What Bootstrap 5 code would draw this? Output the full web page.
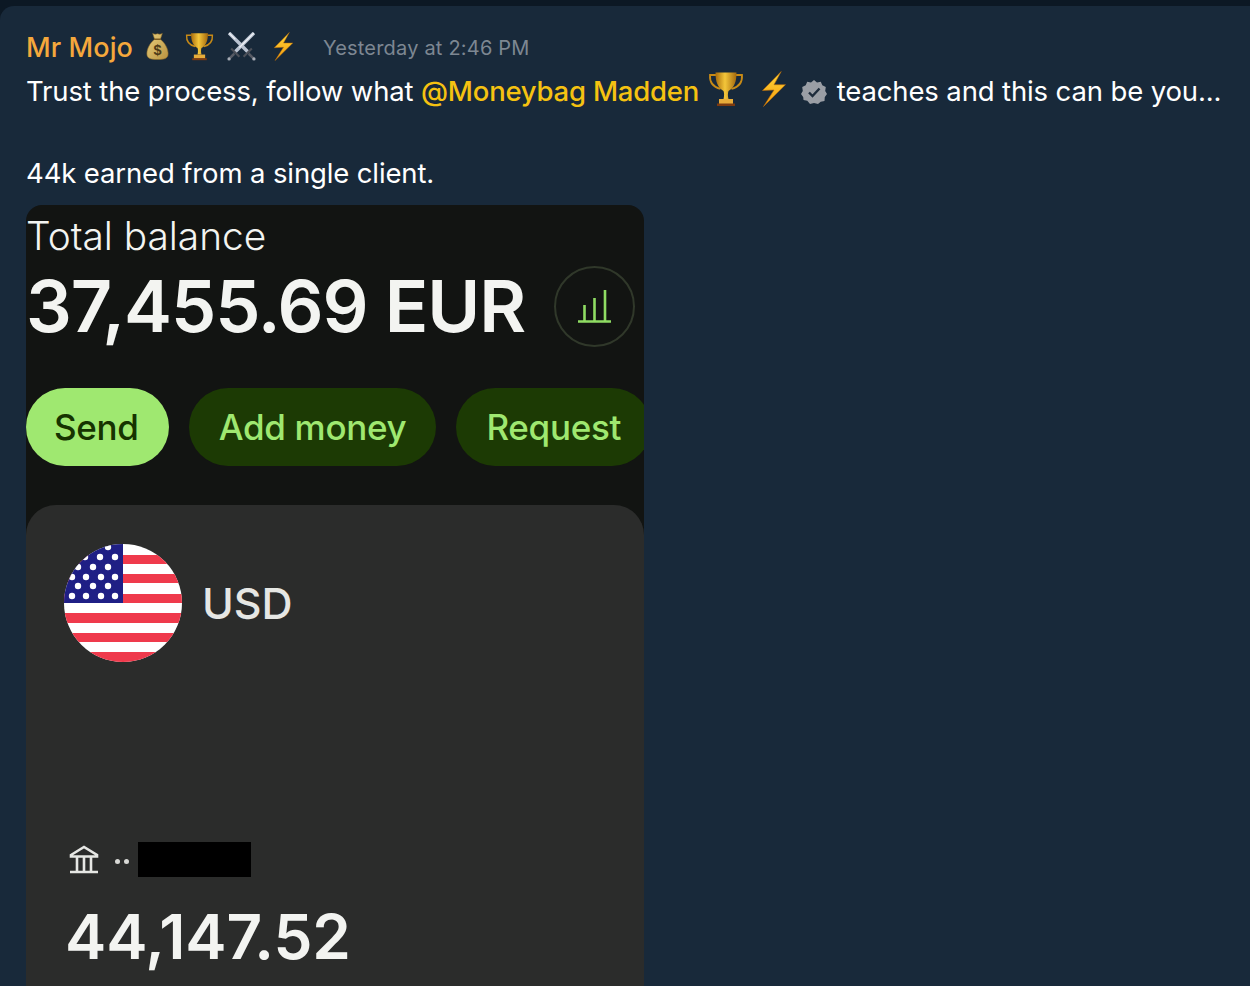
<!DOCTYPE html>
<html lang="en">
<head>
  <meta charset="UTF-8" />
  <meta name="viewport" content="width=device-width, initial-scale=1.0"/>
  <title>Message</title>
  <link href="https://cdn.jsdelivr.net/npm/bootstrap@5.3.3/dist/css/bootstrap.min.css" rel="stylesheet">
  <style>
    body {
      background: #0c1824;
      font-family: Inter, "Liberation Sans", sans-serif;
      height: 986px;
      overflow: hidden;
    }
    .msg-panel {
      background: #18293a;
      margin-top: 6px;
      height: 980px;
      padding: 22px 0 0 26px;
      border-top-left-radius: 14px;
      overflow: hidden;
    }
    .msg-head { height: 40px; margin-bottom: 3px; }
    .author { color: #f5a83c; font-size: 27px; font-weight: 500; letter-spacing: .08px; margin-right: 10px; }
    .stamp { color: #7d8792; font-size: 20px; margin-left: 12px; letter-spacing: .2px; }
    .emo-sm { width: 29px; height: 29px; margin-right: 13px; margin-top: -4px; }
    .msg-text { color: #fff; font-size: 27.5px; line-height: 41px; letter-spacing: -.13px; white-space: nowrap; }
    .mention { color: #f5c211; font-weight: 500; letter-spacing: -.22px; }
    .emo-lg { width: 36px; height: 36px; vertical-align: -6px; margin: 0 3px 0 9px; }
    .badge-ic { width: 26px; height: 26px; vertical-align: -4px; margin: 0 2px 0 6px; }
    .shot {
      background: #121412;
      width: 618px;
      height: 790px;
      margin-top: 11px;
      border-radius: 16px 16px 0 0;
      overflow: hidden;
      color: #f3f4f1;
    }
    .total-lbl { font-size: 38.8px; font-weight: 300; line-height: 46px; padding-top: 8px; box-sizing: content-box; }
    .total-row { height: 82px; margin-top: 6px; }
    .total-num { font-size: 72px; font-weight: 600; letter-spacing: -1.05px; line-height: 82px; width: 528px; }
    .chart-btn {
      width: 81px;
      height: 81px;
      border: 2px solid #30382a;
      border-radius: 50%;
      flex-shrink: 0;
    }
    .pill-row { margin-top: 41px; gap: 20px; height: 78px; }
    .pill-btn {
      height: 78px;
      border-radius: 39px;
      font-size: 35px;
      font-weight: 500;
      letter-spacing: -.3px;
      padding: 0 30px;
      flex-shrink: 0;
      background: #1c3a04;
      color: #9fe870;
    }
    .pill-btn.is-on { background: #9fe870; color: #163300; padding-left: 28px; }
    .acct-card {
      background: #2b2c2b;
      margin-top: 39px;
      height: 500px;
      border-radius: 30px 30px 0 0;
      padding: 39px 0 0 38px;
    }
    .flag-ic { width: 118px; height: 118px; flex-shrink: 0; }
    .cur-name { font-size: 43px; font-weight: 500; color: #e6e7e4; margin-left: 20px; }
    .bank-row { margin-top: 180px; height: 35px; padding-left: 4px; }
    .bank-ic { width: 32px; height: 32px; }
    .dots { gap: 4px; margin: 4px 9px 0 15px; }
    .dots i { width: 5px; height: 5px; background: #d8d9d6; border-radius: 50%; }
    .redact { width: 113px; height: 35px; background: #000; }
    .acct-num { font-size: 62px; font-weight: 600; letter-spacing: -.15px; line-height: 70px; margin: 25px 0 0 1px; }
  </style>
</head>
<body>
  <svg width="0" height="0" class="d-block">
    <defs>
      <linearGradient id="goldG" x1="0" x2="1" y1="0" y2="0">
        <stop offset="0" stop-color="#a86c0c"/><stop offset=".45" stop-color="#f4c63a"/><stop offset="1" stop-color="#a4690d"/>
      </linearGradient>
      <linearGradient id="boltG" x1="0" x2="0" y1="0" y2="1">
        <stop offset="0" stop-color="#ffd83a"/><stop offset="1" stop-color="#f59a0c"/>
      </linearGradient>
      <linearGradient id="bagG" x1="0" x2="1" y1="0" y2="1">
        <stop offset="0" stop-color="#e8cf7e"/><stop offset="1" stop-color="#b8923f"/>
      </linearGradient>
      <symbol id="trophy" viewBox="0 0 36 36">
        <path d="M8 4H2c-.5 7 3 12 10.500 14M28 4h6c.5 7-3 12-10.500 14" fill="none" stroke="#c78a16" stroke-width="1.800"/>
        <path d="M7.500 1.500h21c0 9-2 15-8 18.500-.8 2-.8 5 0 8h-5c.8-3 .8-6 0-8-6-3.500-8-9.500-8-18.500z" fill="url(#goldG)"/>
        <rect x="11" y="28" width="14" height="5" fill="#e8ac3a"/>
        <rect x="9" y="32.500" width="18" height="2.500" fill="#7c3a10"/>
      </symbol>
      <symbol id="bolt" viewBox="0 0 24 36">
        <path d="M19.200.5 .5 19.500l11.500-.5L1.500 35.500 23.500 13.700H12z" fill="url(#boltG)" stroke="#b86a08" stroke-width=".6"/>
      </symbol>
      <symbol id="bag" viewBox="0 0 24 30">
        <path d="M7 1.500c2 1 3 1 5 .3 2 .7 3 .7 5-.3l-2 6c5 4 8 10 8 15 0 5-4 6-11 6s-11-1-11-6c0-5 3-11 8-15z" fill="url(#bagG)" stroke="#8a6a2a" stroke-width=".6"/>
        <path d="M8.500 7.500h7" stroke="#7a5a20" stroke-width="1.600"/>
        <text x="12" y="24" text-anchor="middle" font-family="Liberation Sans, sans-serif" font-size="15" font-weight="700" fill="#4a3a18">$</text>
      </symbol>
      <symbol id="swords" viewBox="0 0 28 28">
        <path d="M26 1 7 20M2 1l19 19" stroke="#b9c2d0" stroke-width="3.400" fill="none"/>
        <path d="M26 1 12 15M2 1l6 6" stroke="#eef1f6" stroke-width="1.200" fill="none"/>
        <path d="M4 16l8 8M24 16l-8 8" stroke="#4b4f58" stroke-width="2" fill="none"/>
        <path d="M7 21l-5 5M21 21l5 5" stroke="#565a64" stroke-width="2.400" fill="none"/>
        <circle cx="2" cy="26" r="1.600" fill="#a6acb6"/><circle cx="26" cy="26" r="1.600" fill="#a6acb6"/>
      </symbol>
    </defs>
  </svg>

  <div class="msg-panel">
    <div class="msg-head d-flex align-items-center">
      <span class="author">Mr Mojo</span>
      <svg class="emo-sm"><use href="#bag"/></svg>
      <svg class="emo-sm"><use href="#trophy"/></svg>
      <svg class="emo-sm"><use href="#swords"/></svg>
      <svg class="emo-sm"><use href="#bolt"/></svg>
      <span class="stamp">Yesterday at 2:46 PM</span>
    </div>
    <div class="msg-text">
      Trust the process, follow what <span class="mention">@Moneybag Madden</span><svg class="emo-lg"><use href="#trophy"/></svg><svg class="emo-lg"><use href="#bolt"/></svg><svg class="badge-ic" viewBox="0 0 26 26"><path d="M13 1l3 2.500 3.800-.8 1.500 3.600 3.500 1.700-.6 3.900L26 15l-2.200 3-.3 3.900-3.800.8L17 25l-4-1-4 1-2.700-3.300-3.800-.8L2.200 18 0 15l1.800-3.100-.6-3.900 3.500-1.700L6.200 2.700l3.800.8z" fill="#9a9ea5"/><path d="M8 13.500l3.500 3.500 7-7.500" fill="none" stroke="#1e2c3c" stroke-width="2.400"/></svg> teaches and this can be you...<br><br>44k earned from a single client.
    </div>

    <div class="shot">
      <div class="total-lbl">Total balance</div>
      <div class="total-row d-flex align-items-center">
        <div class="total-num">37,455.69 EUR</div>
        <div class="chart-btn d-flex align-items-center justify-content-center">
          <svg width="33" height="33" viewBox="0 0 33 33" fill="none" stroke="#8fdc63" stroke-width="2.600"><path d="M0 31.500h33M6.500 31V15M16.500 31V8M27 31V0"/></svg>
        </div>
      </div>
      <div class="pill-row d-flex">
        <div class="pill-btn is-on d-flex align-items-center">Send</div>
        <div class="pill-btn d-flex align-items-center">Add money</div>
        <div class="pill-btn d-flex align-items-center">Request</div>
      </div>
      <div class="acct-card">
        <div class="d-flex align-items-center">
          <svg class="flag-ic" viewBox="0 0 118 118">
            <defs><clipPath id="flagClip"><circle cx="59" cy="59" r="59"/></clipPath></defs>
            <g clip-path="url(#flagClip)">
              <rect width="118" height="118" fill="#fff"/>
              <g fill="#ef3a4c">
                <rect y="11" width="118" height="9"/>
                <rect y="30" width="118" height="9"/>
                <rect y="50" width="118" height="9"/>
                <rect y="69" width="118" height="10"/>
                <rect y="89" width="118" height="9"/>
                <rect y="108" width="118" height="10"/>
              </g>
              <rect width="59" height="59" fill="#1f1f85"/>
              <g fill="#fff">
                <circle cx="44" cy="3" r="3.200"/>
                <circle cx="21" cy="13" r="3.200"/><circle cx="36" cy="13" r="3.200"/><circle cx="51" cy="13" r="3.200"/>
                <circle cx="14" cy="23" r="3.200"/><circle cx="29" cy="23" r="3.200"/><circle cx="44" cy="23" r="3.200"/>
                <circle cx="8" cy="33" r="3.200"/><circle cx="22" cy="33" r="3.200"/><circle cx="37" cy="33" r="3.200"/><circle cx="51" cy="33" r="3.200"/>
                <circle cx="14" cy="42" r="3.200"/><circle cx="29" cy="42" r="3.200"/><circle cx="44" cy="42" r="3.200"/>
                <circle cx="8" cy="52" r="3.200"/><circle cx="22" cy="52" r="3.200"/><circle cx="37" cy="52" r="3.200"/><circle cx="51" cy="52" r="3.200"/>
              </g>
            </g>
          </svg>
          <div class="cur-name">USD</div>
        </div>
        <div class="bank-row d-flex align-items-center">
          <svg class="bank-ic" viewBox="0 0 32 32" fill="none" stroke="#e6e7e4" stroke-width="2.600"><path d="M3 11 16 3l13 8v1.500H3zM9 13v14M16 13v14M23 13v14M2 28h28"/></svg>
          <div class="dots d-flex"><i></i><i></i></div>
          <div class="redact"></div>
        </div>
        <div class="acct-num">44,147.52</div>
      </div>
    </div>
  </div>
</body>
</html>
